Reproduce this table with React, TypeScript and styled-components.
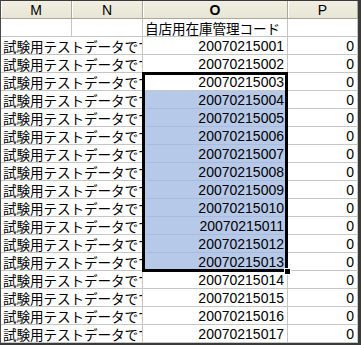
import styled, { createGlobalStyle } from 'styled-components';

const GlobalStyle = createGlobalStyle`
  html, body {
    margin: 0;
    padding: 0;
    background: #ffffff;
  }
`;

const Sheet = styled.div`
  position: relative;
  box-sizing: border-box;
  width: 361px;
  height: 345px;
  display: grid;
  grid-template-columns: 71px 71px 145px 70px;
  grid-auto-rows: 18px;
  border-top: 1px solid #3a3a3a;
  border-left: 1px solid #4a4a4a;
  border-right: 3px solid #3a3a3a;
  border-bottom: 2px solid #3a3a3a;
  overflow: hidden;
  font-family: 'Noto Sans CJK JP', 'Liberation Sans', sans-serif;
  color: #000000;
`;

const ColumnHeader = styled.div<{ $current?: boolean }>`
  box-sizing: border-box;
  display: flex;
  align-items: center;
  justify-content: center;
  background: linear-gradient(#f1efe2, #e8e5d5);
  border-right: 1px solid #aca899;
  border-bottom: 1px solid #aca899;
  box-shadow: inset 1px 0 0 #ffffff;
  font-family: 'Liberation Sans', sans-serif;
  font-size: 14px;
  font-weight: ${(p) => (p.$current ? 700 : 400)};
`;

const Cell = styled.div<{ $span?: number; $align?: 'left' | 'right'; $selected?: boolean }>`
  box-sizing: border-box;
  grid-column: span ${(p) => p.$span ?? 1};
  display: flex;
  align-items: center;
  justify-content: ${(p) => (p.$align === 'right' ? 'flex-end' : 'flex-start')};
  padding: 1px ${(p) => (p.$align === 'right' ? '3px' : '0')} 0 ${(p) => (p.$align === 'right' ? '0' : '2px')};
  overflow: hidden;
  white-space: nowrap;
  background: ${(p) => (p.$selected ? '#b7c9e9' : '#ffffff')};
  border-right: 1px solid #c6c6c6;
  border-bottom: 1px solid ${(p) => (p.$selected ? '#a9bcdc' : '#c6c6c6')};
`;

const JpText = styled.span`
  font-size: 13.6px;
  letter-spacing: -0.1px;
`;

const NumText = styled.span`
  font-family: 'Liberation Sans', sans-serif;
  font-size: 14px;
`;

// thick outline around the selected range
const SelectionBox = styled.div`
  position: absolute;
  left: 141px;
  top: 71px;
  width: 146px;
  height: 200px;
  box-sizing: border-box;
  border: 3px solid #000000;
  pointer-events: none;
`;

const FillHandle = styled.div`
  position: absolute;
  left: 284px;
  top: 268px;
  width: 5px;
  height: 5px;
  background: #000000;
  box-shadow: 0 0 0 1px #ffffff;
`;

const codes = Array.from({ length: 17 }, (_, i) => `200702150${String(i + 1).padStart(2, '0')}`);

const App = () => (
  <>
    <GlobalStyle />
    <Sheet>
      <ColumnHeader>M</ColumnHeader>
      <ColumnHeader>N</ColumnHeader>
      <ColumnHeader $current>O</ColumnHeader>
      <ColumnHeader>P</ColumnHeader>

      <Cell />
      <Cell />
      <Cell>
        <JpText>自店用在庫管理コード</JpText>
      </Cell>
      <Cell />

      {codes.map((code, i) => (
        <Row key={code} code={code} selected={i >= 3 && i <= 12} />
      ))}

      <SelectionBox />
      <FillHandle />
    </Sheet>
  </>
);

const Row = ({ code, selected }: { code: string; selected: boolean }) => (
  <>
    <Cell $span={2}>
      <JpText>試験用テストデータです</JpText>
    </Cell>
    <Cell $align="right" $selected={selected}>
      <NumText>{code}</NumText>
    </Cell>
    <Cell $align="right">
      <NumText>0</NumText>
    </Cell>
  </>
);

export default App;
